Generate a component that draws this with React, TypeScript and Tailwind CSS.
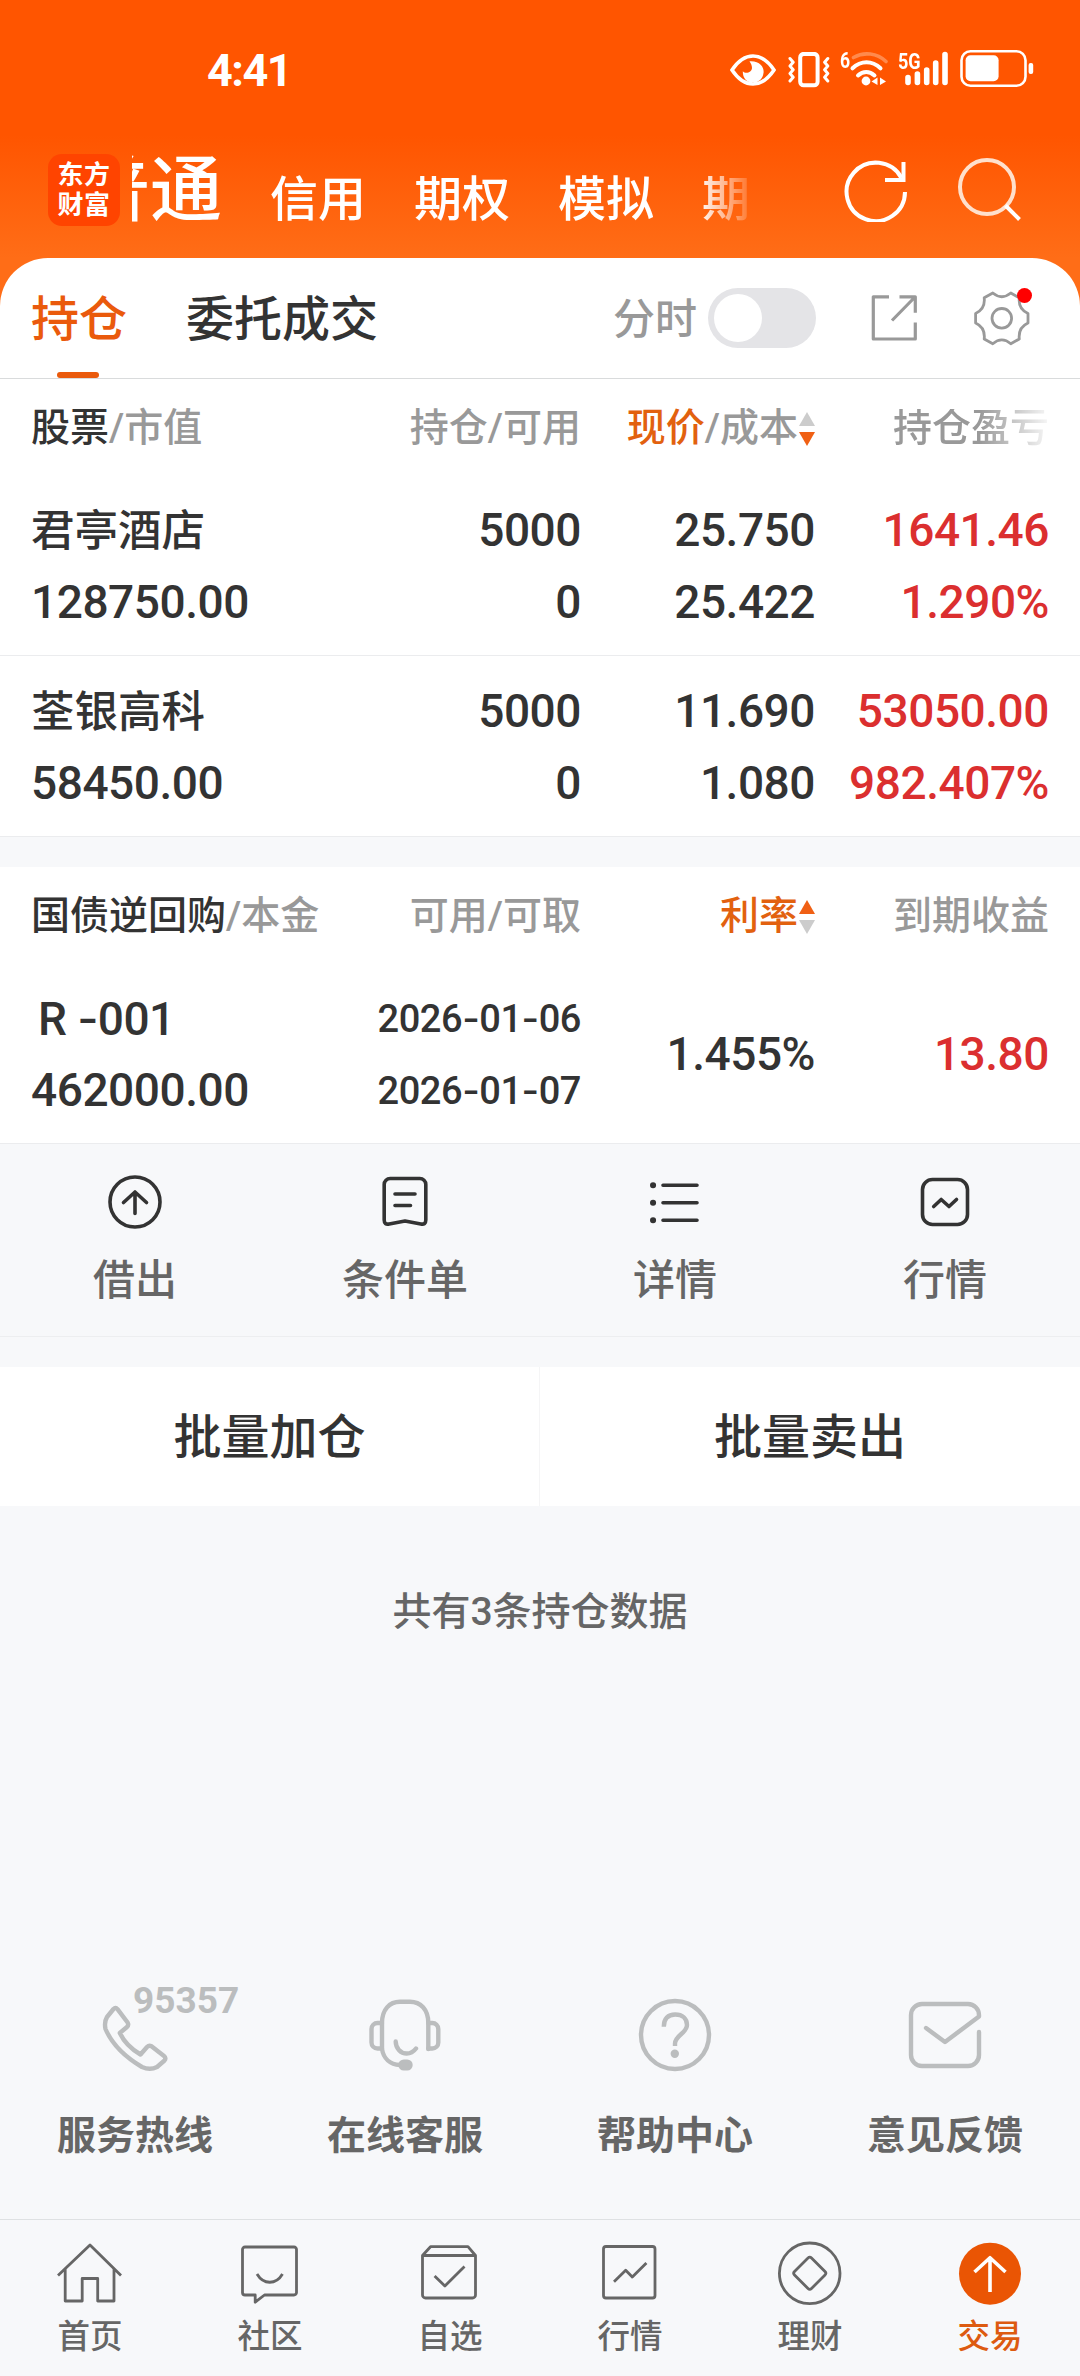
import type { ReactNode } from "react";

type Holding = {
  name: string;
  value: string;
  amount: string;
  available: string;
  price: string;
  cost: string;
  profit: string;
  ratio: string;
};

const holdings: Holding[] = [
  {
    name: "君亭酒店",
    value: "128750.00",
    amount: "5000",
    available: "0",
    price: "25.750",
    cost: "25.422",
    profit: "1641.46",
    ratio: "1.290%",
  },
  {
    name: "荃银高科",
    value: "58450.00",
    amount: "5000",
    available: "0",
    price: "11.690",
    cost: "1.080",
    profit: "53050.00",
    ratio: "982.407%",
  },
];

function StatusBar() {
  return (
    <div className="flex h-[140px] items-start pt-[50px] pl-[207px] text-white">
      <span className="w-[523px] pt-px text-[45px] leading-[40px] font-bold tracking-[-1.5px]">
        4:41
      </span>
      <svg className="mt-1 h-8 w-[46px]" viewBox="0 0 46 32" fill="none">
        <path
          d="M2 16C9 5.500 16 2 23 2s14 3.500 21 14c-7 10.500-14 14-21 14S9 26.500 2 16Z"
          stroke="currentColor"
          strokeWidth="3.600"
        />
        <path
          d="M19.500 7.200C29 6.500 34 12 33.600 18.500 33 25 28.500 28.600 23 28.600c-6.500 0-10.300-4.600-10.200-11.400 3 3.300 9 1 9.200-3.200 0-2.500-1-4.600-2.500-6.800Z"
          fill="currentColor"
        />
      </svg>
      <svg
        className="mt-0.5 ml-3 h-9 w-[42px]"
        viewBox="0 0 42 36"
        fill="none"
        stroke="currentColor"
        strokeLinecap="round"
        strokeLinejoin="round"
      >
        <rect x="12.200" y="1.900" width="17.400" height="31.400" rx="3.500" strokeWidth="4" />
        <path
          d="m2 6.500 3.200 3.700L2 14l3.200 3.700L2 21.500l3.200 3.700L2 29M39.800 6.500l-3.200 3.700 3.200 3.800-3.200 3.700 3.200 3.800-3.200 3.700 3.200 3.800"
          strokeWidth="3"
        />
      </svg>
      <div className="relative ml-2.5 h-[38px] w-12">
        <span className="absolute top-0.5 left-0 origin-left scale-x-[0.8] text-[22px] leading-[18px] font-bold">
          6
        </span>
        <svg className="h-[38px] w-12" viewBox="0 0 48 38" fill="none" strokeLinecap="round">
          <path d="M13.500 7.500C24 1.500 37 3 46 11.500" stroke="#ff8a4d" strokeWidth="3.600" />
          <path d="M12.500 18.300C21 10.300 32 10.300 40.500 18.300" stroke="currentColor" strokeWidth="4" />
          <path d="M18 25.500c5-4.700 11.500-4.700 16.500 0" stroke="currentColor" strokeWidth="4" />
          <circle cx="26" cy="31" r="4.400" fill="currentColor" />
          <path d="m31.500 31.500 6-4v7.500ZM46 31.500l-6-4v7.500Z" fill="currentColor" />
        </svg>
      </div>
      <div className="relative ml-[9px] h-[38px] w-[54px]">
        <span className="absolute top-[3px] left-[1px] origin-left scale-x-[0.82] text-[22px] leading-[18px] font-bold">
          5G
        </span>
        <svg
          className="h-[38px] w-[54px]"
          viewBox="0 0 54 38"
          stroke="currentColor"
          strokeWidth="5.600"
          strokeLinecap="round"
        >
          <path d="M11 27.500v5M20.400 24v8.500M29.700 20v12.500M38.700 13v19.500M48 4.500v28" />
        </svg>
      </div>
      <svg className="ml-[9px] h-[38px] w-[74px]" viewBox="0 0 74 38" fill="none">
        <rect x="1.500" y="1.300" width="64" height="34.400" rx="9" stroke="currentColor" strokeWidth="2.600" />
        <rect x="5.600" y="5.300" width="33" height="26" rx="5" fill="currentColor" />
        <rect x="68.600" y="13" width="4.600" height="11" rx="2" fill="currentColor" />
      </svg>
    </div>
  );
}

function AccountBar() {
  return (
    <div className="flex h-[118px] items-start pl-12 text-white">
      <div className="mt-3.5 flex h-[72px] w-[72px] flex-col items-center justify-center rounded-[14px] bg-[#ff4400] text-[26px] leading-[30px] font-bold tracking-[0.5px]">
        <span>东方</span>
        <span>财富</span>
      </div>
      <div className="ml-3 flex h-[110px] w-[622px] overflow-hidden">
        <div className="-ml-[54px] flex items-baseline gap-12 whitespace-nowrap [mask-image:linear-gradient(to_right,#000_620px,transparent_680px)]">
          <span className="text-[72px] leading-[102px] font-medium">普通</span>
          <span className="translate-y-px text-[48px] font-medium">信用</span>
          <span className="translate-y-px text-[48px] font-medium">期权</span>
          <span className="translate-y-px text-[48px] font-medium">模拟</span>
          <span className="translate-y-px text-[48px] font-medium">期</span>
        </div>
      </div>
      <svg
        className="mt-[18px] ml-[90px] h-16 w-16"
        viewBox="0 0 64 64"
        fill="none"
        stroke="currentColor"
        strokeWidth="4"
      >
        <path d="M61 34A29.200 29.200 0 1 1 57.500 20" />
        <path d="M59.500 4v18H41" />
      </svg>
      <svg className="mt-[17px] ml-[49px] h-16 w-16" viewBox="0 0 64 64" fill="none" strokeWidth="4">
        <circle cx="30" cy="30" r="27" stroke="#ffe0cc" />
        <path d="m48.500 48.500 14 14" stroke="#fff" />
      </svg>
    </div>
  );
}

function PanelTabs() {
  return (
    <div className="flex h-[121px] items-center rounded-t-[48px] border-b border-[#d9dbdc] bg-white">
      <div className="relative ml-[31px] flex h-full items-center pt-[3px] text-[48px] font-medium text-[#ea5a0c]">
        持仓
        <span className="absolute bottom-0 left-[26px] h-1.5 w-[42px] rounded-full bg-[#ea5a0c]" />
      </div>
      <div className="ml-[59px] pt-[3px] text-[48px] font-medium text-[#333]">委托成交</div>
      <span className="ml-[235px] pt-0.5 text-[42px] font-medium text-[#999]">分时</span>
      <div className="ml-[11px] flex h-[60px] w-[108px] items-center rounded-full bg-[#e4e4e7] p-1.5">
        <span className="h-12 w-12 rounded-full bg-white" />
      </div>
      <svg
        className="ml-[54px] h-12 w-12"
        viewBox="0 0 48 48"
        fill="none"
        stroke="#999"
        strokeWidth="3.200"
        strokeLinejoin="round"
      >
        <path d="M19 2.800H3.300V45h42V28.500M29.500 2.800h15.800v16M22 26.500 45 3" />
      </svg>
      <div className="relative ml-14 h-[55px] w-14">
        <svg
          className="h-[55px] w-14"
          viewBox="0 0 56 55"
          fill="none"
          stroke="#999"
          strokeWidth="2.800"
          strokeLinejoin="round"
        >
          <path d="M18.800 2Q27.800 9.500 36.800 2L45.300 6.800Q44 18 54 22.500V32Q44 36.500 45.300 48L36.800 52.700Q27.800 45 18.800 52.700L10.200 48Q11.500 36.500 1.600 32V22.500Q11.500 18 10.200 6.800Z" />
          <circle cx="27.800" cy="27.300" r="9.800" />
        </svg>
        <span className="absolute -top-[3px] left-[43px] h-[15px] w-[15px] rounded-full bg-[#ff0000]" />
      </div>
    </div>
  );
}

function SortArrows({ direction }: { direction: "up" | "down" }) {
  return (
    <svg className="ml-px h-[34px] w-4" viewBox="0 0 16 34">
      <path d="M8 0l8 14H0Z" fill={direction === "up" ? "#f06014" : "#ccc"} />
      <path d="M0 20h16L8 34Z" fill={direction === "down" ? "#f06014" : "#ccc"} />
    </svg>
  );
}

function TableHead({ children }: { children: ReactNode }) {
  return (
    <div className="grid h-24 grid-cols-[316px_234px_234px_234px] items-center bg-white px-[31px] pt-[3px] text-[39px] leading-none font-medium whitespace-nowrap text-[#999]">
      {children}
    </div>
  );
}

function Cell({
  top,
  bottom,
  className = "items-end",
}: {
  top: ReactNode;
  bottom: ReactNode;
  className?: string;
}) {
  return (
    <div className={`flex flex-col whitespace-nowrap ${className}`}>
      <span className="flex h-[72px] items-center">{top}</span>
      <span className="flex h-[72px] items-center">{bottom}</span>
    </div>
  );
}

function HoldingRow({ item }: { item: Holding }) {
  return (
    <div className="grid h-[181px] grid-cols-[316px_234px_234px_234px] border-b border-[#ebecee] bg-white px-[31px] pt-[19px] text-[46px] leading-none font-medium tracking-[-0.45px] text-[#333]">
      <Cell
        className="items-start"
        top={<span className="pt-[3px] text-[43.5px] tracking-normal">{item.name}</span>}
        bottom={item.value}
      />
      <Cell top={item.amount} bottom={item.available} />
      <Cell top={item.price} bottom={item.cost} />
      <Cell className="items-end text-[#db2f2f]" top={item.profit} bottom={item.ratio} />
    </div>
  );
}

// Inter has the wider dash that the tabular dates use
function Dashed({ text }: { text: string }) {
  return (
    <span className="whitespace-pre">
      {text.split("-").map((part, i) => (
        <span key={i}>
          {i > 0 && <span className="font-[Inter]">-</span>}
          {part}
        </span>
      ))}
    </span>
  );
}

function RepoRow() {
  return (
    <div className="grid h-[181px] grid-cols-[316px_234px_234px_234px] border-b border-[#ebecee] bg-white px-[31px] pt-[19px] text-[46px] leading-none font-medium tracking-[-0.45px] text-[#333]">
      <Cell
        className="items-start"
        top={
          <span className="pl-[7px] tracking-[-0.6px]">
            <Dashed text="R -001" />
          </span>
        }
        bottom="462000.00"
      />
      <Cell
        className="items-end text-[38px]"
        top={<Dashed text="2026-01-06" />}
        bottom={<Dashed text="2026-01-07" />}
      />
      <div className="flex h-36 items-center justify-end">1.455%</div>
      <div className="flex h-36 items-center justify-end text-[#db2f2f]">13.80</div>
    </div>
  );
}

const actions = [
  {
    label: "借出",
    icon: (
      <>
        <circle cx="30" cy="30" r="25" />
        <path d="M30 41.500V20M18.500 30.500 30 20 41.500 30.500" />
      </>
    ),
  },
  {
    label: "条件单",
    icon: (
      <>
        <path d="M15.200 6.500h29.600a6 6 0 0 1 6 6V48q0 5-5 4L30 49l-15.800 3q-5 1-5-4V12.500a6 6 0 0 1 6-6Z" />
        <path d="M20 22h20M20 33.500h15.500" />
      </>
    ),
  },
  {
    label: "详情",
    icon: (
      <>
        <path d="M18 13.200h34M18 30.700h34M18 48.200h34" />
        <path d="M8 13.200h.1M8 30.700h.1M8 48.200h.1" strokeWidth="6" />
      </>
    ),
  },
  {
    label: "行情",
    icon: (
      <>
        <rect x="7.500" y="7.500" width="45" height="45" rx="10" />
        <path d="m18.700 34.500 7.500-7 7.800 7 7.500-7" />
      </>
    ),
  },
];

const services = [
  {
    label: "服务热线",
    badge: "95357",
    icon: (
      <path d="M14.500 10Q16.500 8 18.500 10.200L28.600 23.500Q30 26 28 28L20.800 34Q27 47 41.500 55.500L48 48Q50 46 52.500 47.300L65 57Q67.500 59 65.500 61.500L58 68Q51 71.500 43 68Q16 52 6.500 30Q5 23 8 18Z" />
    ),
  },
  {
    label: "在线客服",
    icon: (
      <>
        <path d="M59.300 50V24C59.300 10.500 51.500 2.800 41 2.800H31C20.500 2.800 13 10.500 13 24v26c1.500 9.500 8 15.500 18 16" />
        <path d="M13 24H8.500a6 6 0 0 0-6 6v13.500a6 6 0 0 0 6 6H13M59.300 24h4a6 6 0 0 1 6 6v13.500a6 6 0 0 1-6 6h-4M26.700 42.500c0 6.500 4.800 12 11 12 4 0 7-2 9.300-5" />
        <rect x="31.500" y="62.700" width="10" height="6.600" rx="3.300" fill="currentColor" />
      </>
    ),
  },
  {
    label: "帮助中心",
    icon: (
      <>
        <circle cx="36" cy="36" r="34" />
        <path d="M24.800 27.700C24.800 19.500 29 15.500 36.200 15.500 43.500 15.500 48 19.500 48 26c0 8-12 10.500-12 18.500v2.500" strokeLinecap="butt" />
        <circle cx="35.800" cy="54.700" r="2" fill="currentColor" />
      </>
    ),
  },
  {
    label: "意见反馈",
    icon: (
      <path d="M17 29 36 43 70 17.500V16A11 11 0 0 0 59 5H13A11 11 0 0 0 2 16v40a11 11 0 0 0 11 11h46a11 11 0 0 0 11-11V33" />
    ),
  },
];

const tabs = [
  {
    label: "首页",
    icon: (
      <path d="M1 35.500 33 5l31 30.500M8.200 29v32h17V38.500h15.500V61H57V29" />
    ),
  },
  {
    label: "社区",
    icon: (
      <path d="M8 7h49a2.500 2.500 0 0 1 2.500 2.500v43A2.500 2.500 0 0 1 57 55H27.500l-9.300 7.200V55H8a2.500 2.500 0 0 1-2.500-2.500v-43A2.500 2.500 0 0 1 8 7ZM20 34c6.500 11 19 11 25.500 0" />
    ),
  },
  {
    label: "自选",
    icon: (
      <path d="M5.500 15.500 13.500 6.700H51l7.500 8.800V55a3 3 0 0 1-3 3h-47a3 3 0 0 1-3-3ZM5.500 15.500h53M17.600 36l10.300 10L47.500 26.500" />
    ),
  },
  {
    label: "行情",
    icon: (
      <>
        <rect x="6.500" y="6.500" width="51.500" height="51.500" rx="2.500" />
        <path d="m17 41.700 11.700-11.500 6.600 6.800L49.400 23" />
      </>
    ),
  },
  {
    label: "理财",
    icon: (
      <>
        <circle cx="32.700" cy="33.300" r="30.300" />
        <path d="M31 18 17.500 31.500a2.500 2.500 0 0 0 0 3.500L31 48.500a2.500 2.500 0 0 0 3.500 0L48 35a2.500 2.500 0 0 0 0-3.500L34.500 18a2.500 2.500 0 0 0-3.500 0Z" />
      </>
    ),
  },
  {
    label: "交易",
    active: true,
    icon: (
      <>
        <circle cx="33" cy="33.700" r="31" fill="#ea5504" stroke="none" />
        <path d="M33 52V18M17.500 32 33 17.700 48.500 32" stroke="#fff" strokeWidth="3.600" />
      </>
    ),
  },
];

export default function App() {
  return (
    <div className="h-[2376px] w-[1080px] overflow-hidden bg-[#f7f8fa] font-[Roboto,'Noto_Sans_CJK_SC',sans-serif]">
      <div className="bg-[linear-gradient(to_bottom,#ff5500_0px,#ff5500_135px,#ff6d17_258px,#ff6d17_320px)] bg-[length:100%_320px]">
        <StatusBar />
        <AccountBar />
        <PanelTabs />
      </div>

      <TableHead>
        <div>
          <span className="text-[#333]">股票</span>/市值
        </div>
        <div className="text-right">持仓/可用</div>
        <div className="flex items-center justify-end">
          <span className="text-[#e2610f]">现价</span>/成本
          <SortArrows direction="down" />
        </div>
        <div className="text-right [mask-image:linear-gradient(to_right,#000_165px,transparent_240px)]">
          持仓盈亏
        </div>
      </TableHead>
      {holdings.map((item) => (
        <HoldingRow key={item.name} item={item} />
      ))}

      <div className="mt-[30px]">
        <TableHead>
          <div>
            <span className="text-[#333]">国债逆回购</span>/本金
          </div>
          <div className="text-right">可用/可取</div>
          <div className="flex items-center justify-end">
            <span className="text-[#e2610f]">利率</span>
            <SortArrows direction="up" />
          </div>
          <div className="text-right">到期收益</div>
        </TableHead>
        <RepoRow />
      </div>

      <div className="grid h-[193px] grid-cols-4 border-b border-[#edeef0]">
        {actions.map((item) => (
          <div key={item.label} className="flex flex-col items-center pt-7">
            <svg
              className="h-[60px] w-[60px] text-[#333]"
              viewBox="0 0 60 60"
              fill="none"
              stroke="currentColor"
              strokeWidth="3.600"
              strokeLinecap="round"
              strokeLinejoin="round"
            >
              {item.icon}
            </svg>
            <span className="mt-[28px] text-[42px] leading-[42px] font-medium text-[#666]">
              {item.label}
            </span>
          </div>
        ))}
      </div>

      <div className="mt-[30px] grid h-[139px] grid-cols-2 bg-white text-[48px] font-medium text-[#333]">
        <button type="button" className="border-r border-[#f5f5f6] pt-0.5">
          批量加仓
        </button>
        <button type="button" className="pt-0.5">
          批量卖出
        </button>
      </div>

      <p className="mt-[86px] text-center text-[39px] leading-[40px] font-medium text-[#666]">
        共有3条持仓数据
      </p>

      <div className="mt-[367px] grid h-[220px] grid-cols-4">
        {services.map((item) => (
          <div key={item.label} className="relative flex flex-col items-center">
            <svg
              className="h-[72px] w-[72px] overflow-visible text-[#bbbdbe]"
              viewBox="0 0 72 72"
              fill="none"
              stroke="currentColor"
              strokeWidth="4.400"
              strokeLinecap="round"
              strokeLinejoin="round"
            >
              {item.icon}
            </svg>
            {item.badge && (
              <span className="absolute -top-[14px] left-[133px] text-[37px] leading-[32px] font-bold text-[#bbbdbe]">
                {item.badge}
              </span>
            )}
            <span className="mt-[45px] text-[39px] leading-[40px] font-bold text-[#666]">
              {item.label}
            </span>
          </div>
        ))}
      </div>

      <nav className="grid h-[157px] grid-cols-6 border-t border-[#dfe1e3]">
        {tabs.map((tab) => (
          <div key={tab.label} className="flex flex-col items-center pt-5">
            <svg
              className="h-[66px] w-[66px] text-[#666]"
              viewBox="0 0 66 66"
              fill="none"
              stroke="currentColor"
              strokeWidth="2.800"
              strokeLinejoin="round"
            >
              {tab.icon}
            </svg>
            <span
              className={
                tab.active
                  ? "mt-[14px] text-[32.5px] leading-[34px] font-medium text-[#dd5a10]"
                  : "mt-[14px] text-[32.5px] leading-[34px] font-medium text-[#666]"
              }
            >
              {tab.label}
            </span>
          </div>
        ))}
      </nav>
    </div>
  );
}
